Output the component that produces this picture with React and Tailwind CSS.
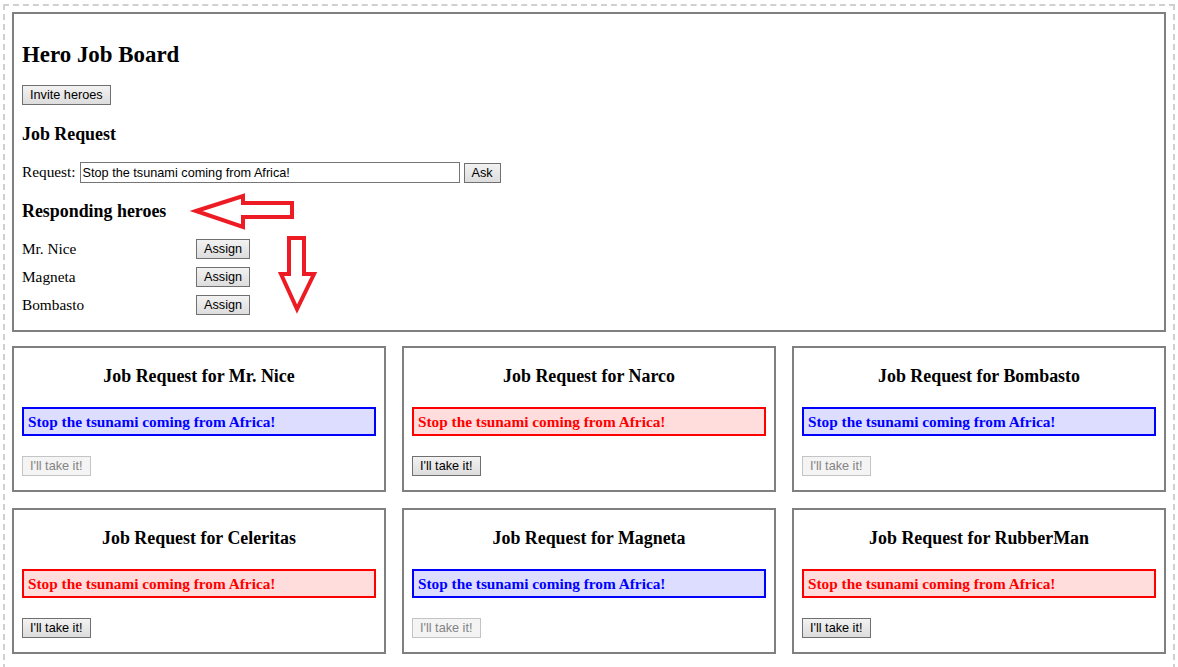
import React from "react";

const btn =
  "font-['Liberation_Sans',Arial,sans-serif] text-[12.7px] leading-[16px] h-[20px] px-[7px] border border-[#707070] bg-gradient-to-b from-[#f2f2f2] to-[#dddddd] text-black";
const btnDisabled =
  "font-['Liberation_Sans',Arial,sans-serif] text-[12.7px] leading-[16px] h-[20px] px-[7px] border border-[#c4c4c4] bg-[#f4f4f4] text-[#838383]";

const heroes = ["Mr. Nice", "Magneta", "Bombasto"];

const cards = [
  { name: "Mr. Nice", blue: true },
  { name: "Narco", blue: false },
  { name: "Bombasto", blue: true },
  { name: "Celeritas", blue: false },
  { name: "Magneta", blue: true },
  { name: "RubberMan", blue: false },
];

function Card({ name, blue }) {
  return (
    <div className="border-2 border-[#808080] px-[8px] pt-[8px] pb-[15px] h-[146px]">
      <h3 className="mt-[10px] text-center font-bold text-[17.9px] leading-[21px]">
        Job Request for {name}
      </h3>
      <div
        className={
          blue
            ? "mt-[20px] border-2 border-[#0000ff] bg-[#ddddff] text-[#0000ff] font-bold text-[15.3px] leading-[21px] px-[4px] py-[2px]"
            : "mt-[20px] border-2 border-[#ff0000] bg-[#ffdddd] text-[#ff0000] font-bold text-[15.3px] leading-[21px] px-[4px] py-[2px]"
        }
      >
        Stop the tsunami coming from Africa!
      </div>
      <div className="mt-[20px] flex">
        <button className={blue ? btnDisabled : btn}>I'll take it!</button>
      </div>
    </div>
  );
}

export default function App() {
  return (
    <div className="bg-white min-h-[667px] font-['Liberation_Serif','Times_New_Roman',serif] text-black">
      <div className="mx-[3px] mt-[4px] border-2 border-dashed border-[#d0d0d0] px-[7px] pt-[6px] pb-[24px]">
        <div className="relative border-2 border-[#808080] px-[8px] pt-[8px] pb-[15px]">
          <h2 className="mt-[19px] text-[22.9px] leading-[27px] font-bold">Hero Job Board</h2>
          <div className="mt-[17px] flex">
            <button className={btn}>Invite heroes</button>
          </div>
          <h3 className="mt-[19px] text-[17.9px] leading-[21px] font-bold">Job Request</h3>
          <div className="mt-[17px] flex items-center h-[21px] text-[15.3px]">
            <span>Request:</span>
            <input
              readOnly
              value="Stop the tsunami coming from Africa!"
              className="ml-[4px] w-[380px] h-[21px] border border-[#767676] px-[2px] font-['Liberation_Sans',Arial,sans-serif] text-[12.7px] text-black outline-none"
            />
            <button className={btn + " ml-[4px]"}>Ask</button>
          </div>
          <h3 className="mt-[18px] text-[17.9px] leading-[21px] font-bold">Responding heroes</h3>
          <div className="mt-[17px] flex flex-col gap-[8px]">
            {heroes.map((h) => (
              <div key={h} className="flex items-center h-[20px] text-[15.3px]">
                <span className="w-[174px]">{h}</span>
                <button className={btn}>Assign</button>
              </div>
            ))}
          </div>
          <svg
            className="absolute left-[164px] top-[164px] pointer-events-none"
            width="150"
            height="140"
            viewBox="178 178 150 140"
          >
            <polygon
              points="196,211 243,196 243,203 292,203 292,217 243,217 243,227"
              fill="none"
              stroke="#ed1c24"
              strokeWidth="4"
              strokeLinejoin="miter"
            />
            <polygon
              points="289,238 304,238 304,274 314,274 297,309 281,274 289,274"
              fill="none"
              stroke="#ed1c24"
              strokeWidth="4"
              strokeLinejoin="miter"
            />
          </svg>
        </div>
        <div className="mt-[14px] grid grid-cols-3 gap-x-[16px] gap-y-[16px]">
          {cards.map((c) => (
            <Card key={c.name} {...c} />
          ))}
        </div>
      </div>
    </div>
  );
}
